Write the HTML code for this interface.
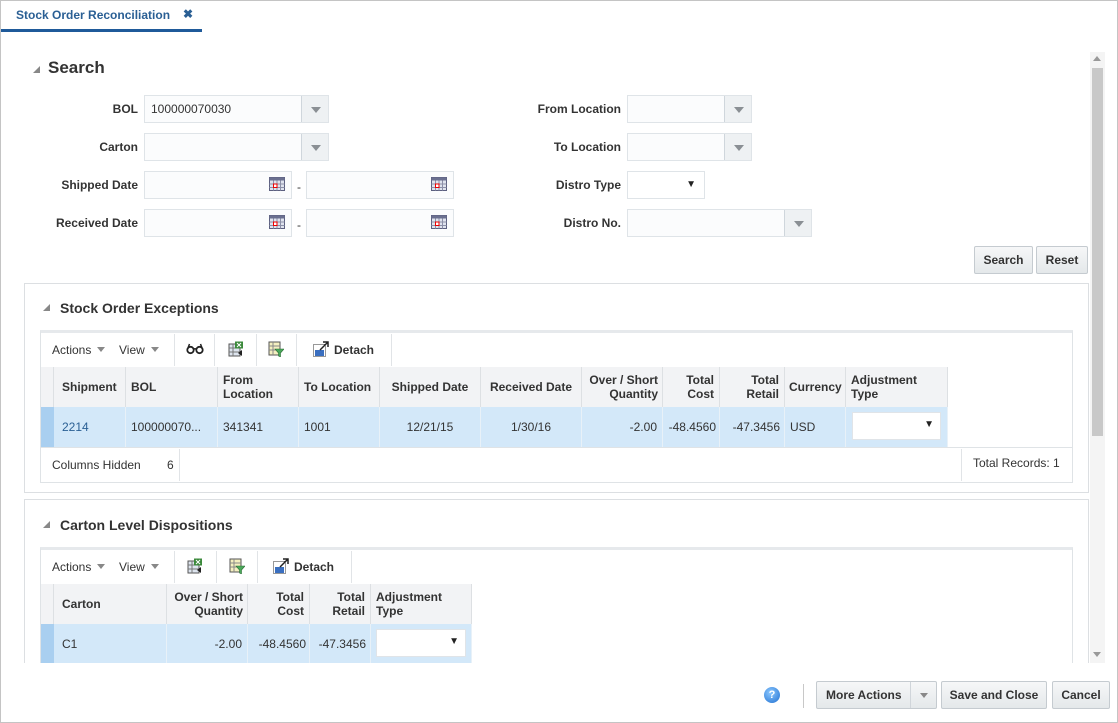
<!DOCTYPE html>
<html><head><meta charset="utf-8"><style>
*{box-sizing:border-box;margin:0;padding:0}
body{width:1118px;height:723px;background:#fff;font-family:"Liberation Sans",Arial,sans-serif;font-size:12px;color:#333;position:relative;overflow:hidden}
.a{position:absolute}
.frame{left:0;top:0;width:1118px;height:723px;border:1px solid #c4c4c4}
.lbl{font-weight:bold;font-size:12px;color:#333;text-align:right;width:130px}
.inp{background:#fbfcfd;border:1px solid #dfe4e8;height:28px}
.dd{border-left:1px solid #cfd6dc;background:#eef1f3;height:26px;width:27px;top:0;right:0}
.dd:after{content:"";position:absolute;left:9px;top:11px;border-left:5px solid transparent;border-right:5px solid transparent;border-top:6px solid #8a8f94}
.btn{background:linear-gradient(#f6f7f8,#e4e8ea);border:1px solid #c5cbd0;border-radius:2px;font-weight:bold;color:#333;text-align:center;line-height:26px;height:28px;font-size:12px}
.panel{border:1px solid #dcdfe2;background:#fff}
.ph{font-weight:bold;font-size:14px;color:#333}
.tri{width:0;height:0;border-left:7px solid transparent;border-bottom:7px solid #888}
.tbl{border:1px solid #dfe3e6;border-top:3px solid #e6e9ec;background:#fff}
.th{background:#f2f3f5;border-right:1px solid #dde0e3;font-weight:bold;color:#333;font-size:12px;line-height:14px;display:flex;align-items:center;padding:0 5px;white-space:nowrap}
.td{background:#d3e8f9;border-right:1px solid #e8f1f8;font-size:12px;color:#333;display:flex;align-items:center;padding:0 5px;white-space:nowrap}
.r{justify-content:flex-end;text-align:right}
.c{justify-content:center}
.sep{width:1px;background:#e1e4e7}
.tb{font-size:12px;color:#333}
.dn{display:inline-block;width:0;height:0;border-left:4px solid transparent;border-right:4px solid transparent;border-top:5px solid #888;margin-left:6px;vertical-align:2px}
.sel{background:#fff;border:1px solid #e0e4e8;height:28px}
.sel:after{content:"▼";position:absolute;right:6px;top:6px;font-size:10px;color:#222}
</style></head><body>
<svg width="0" height="0" style="position:absolute">
<defs>
<symbol id="cal" viewBox="0 0 16 14"><rect x="0.5" y="0.5" width="15" height="13" fill="#dfe3ee" stroke="#5c6080"/><rect x="0.5" y="0.5" width="15" height="3" fill="#6b7090"/><path d="M0.5 7H15.5M0.5 10.5H15.5M4.5 3.5V13.5M8 3.5V13.5M11.5 3.5V13.5" stroke="#8c90a8" stroke-width="1"/><rect x="4.5" y="7" width="3.5" height="3.5" fill="#fff" stroke="#e00"/></symbol>
<symbol id="xls" viewBox="0 0 16 16"><rect x="1" y="3" width="11" height="12" fill="#dde4ee" stroke="#555"/><path d="M1 7H12M1 11H12M5 3V15" stroke="#777"/><rect x="7" y="0.5" width="8" height="7" fill="#3c8a3c"/><path d="M9 2l4 4M13 2l-4 4" stroke="#fff"/><path d="M10 12l4-3v6z" fill="#222"/></symbol>
<symbol id="flt" viewBox="0 0 16 16"><rect x="1" y="1" width="11" height="13" fill="#f4efc0" stroke="#555"/><path d="M1 5H12M1 9H12M5 1V14" stroke="#888"/><path d="M7 8h9l-3.5 4v4l-2-1v-3z" fill="#4aa85a" stroke="#2c6f36" stroke-width=".6"/></symbol>
<symbol id="det" viewBox="0 0 16 16"><rect x="0.5" y="3.5" width="12" height="12" fill="#fff" stroke="#333" stroke-dasharray="1 1"/><rect x="2" y="9" width="9" height="6" fill="#3a6fc0"/><path d="M7 9L15 1M10 1h5v5" stroke="#222" stroke-width="1.5" fill="none"/></symbol>
<symbol id="gls" viewBox="0 0 18 12"><circle cx="4.5" cy="7" r="3.2" fill="none" stroke="#222" stroke-width="1.8"/><circle cx="13.5" cy="7" r="3.2" fill="none" stroke="#222" stroke-width="1.8"/><path d="M7.5 6.5Q9 5 10.5 6.5M2 5L3.5 1M16 5L14.5 1" stroke="#222" stroke-width="1.5" fill="none"/></symbol>
</defs></svg>
<div class="a frame"></div>
<div class="a" style="left:16px;top:8px;font-size:12px;font-weight:bold;color:#2a5f94">Stock Order Reconciliation</div>
<div class="a" style="left:183px;top:7px;font-size:12px;font-weight:bold;color:#2a5f94">✖</div>
<div class="a" style="left:1px;top:29px;width:201px;height:3px;background:#1f5a9a"></div>

<div class="a" style="left:1090px;top:52px;width:15px;height:611px;background:#f4f4f4"></div>
<div class="a" style="left:1092px;top:68px;width:11px;height:368px;background:#c8c8c8"></div>
<div class="a" style="left:1093px;top:56px;border-left:4px solid transparent;border-right:4px solid transparent;border-bottom:5px solid #999"></div>
<div class="a" style="left:1093px;top:652px;border-left:4px solid transparent;border-right:4px solid transparent;border-top:5px solid #999"></div>

<div class="a tri" style="left:33px;top:66px"></div>
<div class="a" style="left:48px;top:58px;font-size:17px;font-weight:bold;color:#333">Search</div>

<div class="a lbl" style="left:8px;top:102px">BOL</div>
<div class="a inp" style="left:144px;top:95px;width:185px"><span style="position:absolute;left:6px;top:6px;color:#333">100000070030</span><div class="a dd"></div></div>
<div class="a lbl" style="left:8px;top:140px">Carton</div>
<div class="a inp" style="left:144px;top:133px;width:185px"><div class="a dd"></div></div>
<div class="a lbl" style="left:8px;top:178px">Shipped Date</div>
<div class="a inp" style="left:144px;top:171px;width:148px"><svg class="a" style="left:124px;top:5px" width="16" height="14"><use href="#cal"/></svg></div>
<div class="a" style="left:297px;top:180px">-</div>
<div class="a inp" style="left:306px;top:171px;width:148px"><svg class="a" style="left:124px;top:5px" width="16" height="14"><use href="#cal"/></svg></div>
<div class="a lbl" style="left:8px;top:216px">Received Date</div>
<div class="a inp" style="left:144px;top:209px;width:148px"><svg class="a" style="left:124px;top:5px" width="16" height="14"><use href="#cal"/></svg></div>
<div class="a" style="left:297px;top:218px">-</div>
<div class="a inp" style="left:306px;top:209px;width:148px"><svg class="a" style="left:124px;top:5px" width="16" height="14"><use href="#cal"/></svg></div>

<div class="a lbl" style="left:491px;top:102px">From Location</div>
<div class="a inp" style="left:627px;top:95px;width:125px"><div class="a dd"></div></div>
<div class="a lbl" style="left:491px;top:140px">To Location</div>
<div class="a inp" style="left:627px;top:133px;width:125px"><div class="a dd"></div></div>
<div class="a lbl" style="left:491px;top:178px">Distro Type</div>
<div class="a inp" style="left:627px;top:171px;width:78px;background:#fff"><span style="position:absolute;right:8px;top:7px;font-size:10px;color:#222">▼</span></div>
<div class="a lbl" style="left:491px;top:216px">Distro No.</div>
<div class="a inp" style="left:627px;top:209px;width:185px"><div class="a dd"></div></div>

<div class="a btn" style="left:974px;top:246px;width:59px">Search</div>
<div class="a btn" style="left:1036px;top:246px;width:52px">Reset</div>

<div class="a panel" style="left:24px;top:283px;width:1065px;height:210px"></div>
<div class="a tri" style="left:43px;top:304px"></div>
<div class="a ph" style="left:60px;top:300px">Stock Order Exceptions</div>
<div class="a tbl" style="left:40px;top:330px;width:1033px;height:153px"></div>
<div class="a tb" style="left:52px;top:343px">Actions<span class="dn"></span></div>
<div class="a tb" style="left:119px;top:343px">View<span class="dn"></span></div>
<div class="a sep" style="left:174px;top:334px;height:32px"></div>
<svg class="a" style="left:186px;top:343px" width="18" height="12"><use href="#gls"/></svg>
<div class="a sep" style="left:214px;top:334px;height:32px"></div>
<svg class="a" style="left:228px;top:341px" width="16" height="16"><use href="#xls"/></svg>
<div class="a sep" style="left:256px;top:334px;height:32px"></div>
<svg class="a" style="left:268px;top:341px" width="16" height="16"><use href="#flt"/></svg>
<div class="a sep" style="left:296px;top:334px;height:32px"></div>
<svg class="a" style="left:313px;top:341px" width="16" height="16"><use href="#det"/></svg>
<div class="a tb" style="left:334px;top:343px;font-weight:bold">Detach</div>
<div class="a sep" style="left:391px;top:334px;height:32px"></div>

<div class="a" style="left:41px;top:367px;width:13px;height:40px;background:#f2f3f5;border-right:1px solid #dde0e3"></div>
<div class="a th" style="left:54px;top:367px;width:72px;height:40px;padding-left:8px">Shipment</div>
<div class="a th" style="left:126px;top:367px;width:92px;height:40px">BOL</div>
<div class="a th" style="left:218px;top:367px;width:81px;height:40px">From<br>Location</div>
<div class="a th" style="left:299px;top:367px;width:81px;height:40px">To Location</div>
<div class="a th c" style="left:380px;top:367px;width:101px;height:40px">Shipped Date</div>
<div class="a th c" style="left:481px;top:367px;width:101px;height:40px">Received Date</div>
<div class="a th r" style="left:582px;top:367px;width:81px;height:40px;padding:0 4px">Over / Short<br>Quantity</div>
<div class="a th r" style="left:663px;top:367px;width:57px;height:40px">Total<br>Cost</div>
<div class="a th r" style="left:720px;top:367px;width:65px;height:40px">Total<br>Retail</div>
<div class="a th" style="left:785px;top:367px;width:61px;height:40px;padding:0 4px">Currency</div>
<div class="a th" style="left:846px;top:367px;width:102px;height:40px">Adjustment<br>Type</div>

<div class="a" style="left:41px;top:407px;width:13px;height:40px;background:#a9cff0"></div>
<div class="a td" style="left:54px;top:407px;width:72px;height:40px;padding-left:8px;color:#2a5f94">2214</div>
<div class="a td" style="left:126px;top:407px;width:92px;height:40px">100000070...</div>
<div class="a td" style="left:218px;top:407px;width:81px;height:40px">341341</div>
<div class="a td" style="left:299px;top:407px;width:81px;height:40px">1001</div>
<div class="a td c" style="left:380px;top:407px;width:101px;height:40px">12/21/15</div>
<div class="a td c" style="left:481px;top:407px;width:101px;height:40px">1/30/16</div>
<div class="a td r" style="left:582px;top:407px;width:81px;height:40px">-2.00</div>
<div class="a td r" style="left:663px;top:407px;width:57px;height:40px;padding:0 3px">-48.4560</div>
<div class="a td r" style="left:720px;top:407px;width:65px;height:40px;padding:0 4px">-47.3456</div>
<div class="a td" style="left:785px;top:407px;width:61px;height:40px">USD</div>
<div class="a td" style="left:846px;top:407px;width:102px;height:40px"></div>
<div class="a sel" style="left:852px;top:412px;width:89px"></div>

<div class="a" style="left:41px;top:447px;width:1031px;height:1px;background:#dfe3e6"></div>
<div class="a tb" style="left:52px;top:458px">Columns Hidden</div>
<div class="a tb" style="left:167px;top:458px">6</div>
<div class="a sep" style="left:179px;top:449px;height:32px"></div>
<div class="a sep" style="left:961px;top:449px;height:32px"></div>
<div class="a tb" style="left:973px;top:456px">Total Records: 1</div>

<div class="a panel" style="left:24px;top:499px;width:1065px;height:170px"></div>
<div class="a tri" style="left:43px;top:521px"></div>
<div class="a ph" style="left:60px;top:517px">Carton Level Dispositions</div>
<div class="a tbl" style="left:40px;top:547px;width:1033px;height:120px;border-bottom:none"></div>
<div class="a tb" style="left:52px;top:560px">Actions<span class="dn"></span></div>
<div class="a tb" style="left:119px;top:560px">View<span class="dn"></span></div>
<div class="a sep" style="left:174px;top:551px;height:32px"></div>
<svg class="a" style="left:187px;top:558px" width="16" height="16"><use href="#xls"/></svg>
<div class="a sep" style="left:216px;top:551px;height:32px"></div>
<svg class="a" style="left:229px;top:558px" width="16" height="16"><use href="#flt"/></svg>
<div class="a sep" style="left:257px;top:551px;height:32px"></div>
<svg class="a" style="left:273px;top:558px" width="16" height="16"><use href="#det"/></svg>
<div class="a tb" style="left:294px;top:560px;font-weight:bold">Detach</div>
<div class="a sep" style="left:351px;top:551px;height:32px"></div>

<div class="a" style="left:41px;top:584px;width:13px;height:40px;background:#f2f3f5;border-right:1px solid #dde0e3"></div>
<div class="a th" style="left:54px;top:584px;width:113px;height:40px;padding-left:8px">Carton</div>
<div class="a th r" style="left:167px;top:584px;width:81px;height:40px;padding:0 4px">Over / Short<br>Quantity</div>
<div class="a th r" style="left:248px;top:584px;width:62px;height:40px">Total<br>Cost</div>
<div class="a th r" style="left:310px;top:584px;width:61px;height:40px">Total<br>Retail</div>
<div class="a th" style="left:371px;top:584px;width:101px;height:40px">Adjustment<br>Type</div>

<div class="a" style="left:41px;top:624px;width:13px;height:39px;background:#a9cff0"></div>
<div class="a td" style="left:54px;top:624px;width:113px;height:39px;padding-left:8px">C1</div>
<div class="a td r" style="left:167px;top:624px;width:81px;height:39px">-2.00</div>
<div class="a td r" style="left:248px;top:624px;width:62px;height:39px;padding:0 3px">-48.4560</div>
<div class="a td r" style="left:310px;top:624px;width:61px;height:39px;padding:0 4px">-47.3456</div>
<div class="a td" style="left:371px;top:624px;width:101px;height:39px"></div>
<div class="a sel" style="left:376px;top:629px;width:90px"></div>

<div class="a" style="left:1px;top:663px;width:1116px;height:59px;background:#fff"></div>
<div class="a" style="left:764px;top:687px;width:16px;height:16px;border-radius:50%;background:radial-gradient(circle at 40% 35%,#8cc8ff,#1f6fd0);color:#fff;font-size:11px;font-weight:bold;text-align:center;line-height:16px">?</div>
<div class="a" style="left:803px;top:684px;width:1px;height:24px;background:#c8c8c8"></div>
<div class="a btn" style="left:816px;top:681px;width:121px;text-align:left;padding-left:9px">More Actions<span style="position:absolute;left:93px;top:0;width:1px;height:26px;background:#d0d5da"></span><span style="position:absolute;left:103px;top:11px;border-left:4px solid transparent;border-right:4px solid transparent;border-top:5px solid #888"></span></div>
<div class="a btn" style="left:941px;top:681px;width:106px">Save and Close</div>
<div class="a btn" style="left:1052px;top:681px;width:58px">Cancel</div>
</body></html>
